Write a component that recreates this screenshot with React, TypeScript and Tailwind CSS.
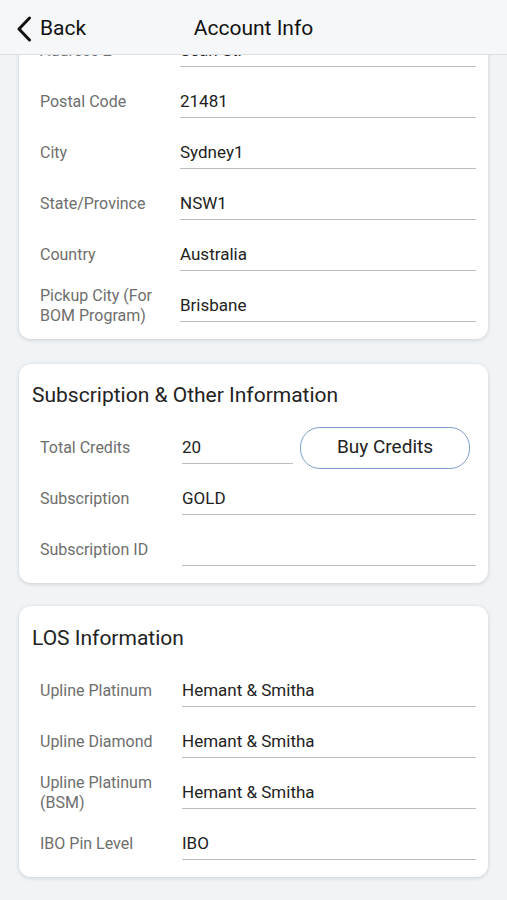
const Row = ({
  label,
  value,
  labelWidth = "w-[140px]",
}: {
  label: string;
  value: string;
  labelWidth?: string;
}) => (
  <div className="flex items-center h-[51px]">
    <div
      className={`${labelWidth} shrink-0 pr-[10px] text-[16px] leading-[20px] text-[#6e6e6e]`}
    >
      {label}
    </div>
    <div className="flex-1 h-[33px] pt-[2px] flex items-center border-b-[1.5px] border-[#bdbdbd] text-[17px] text-[#222]">
      {value}
    </div>
  </div>
);

const Card = ({ children, className = "" }: { children: React.ReactNode; className?: string }) => (
  <div
    className={`bg-white rounded-[12px] shadow-[0_1px_4px_rgba(0,0,0,0.16)] pl-[21px] pr-[12px] ${className}`}
  >
    {children}
  </div>
);

const App: React.FunctionComponent = () => {
  return (
    <div
      className="w-[507px] h-[900px] overflow-hidden bg-[#f1f4f7] flex flex-col"
      style={{ fontFamily: "Roboto, 'Liberation Sans', sans-serif" }}
    >
      <div className="relative z-10 h-[55px] shrink-0 bg-[#f6f7f9] border-b border-[#dedfe1] flex items-center pt-[4px]">
        <div className="flex items-center pl-[16px] gap-[8px] w-[150px]">
          <svg width="16" height="26" viewBox="0 0 16 26" fill="none">
            <polyline
              points="13.5,2 3,13 13.5,24"
              stroke="#111"
              strokeWidth="3"
              strokeLinecap="round"
              strokeLinejoin="round"
            />
          </svg>
          <span className="text-[21px] text-[#111]">Back</span>
        </div>
        <div className="absolute left-0 right-0 text-center text-[21px] text-[#111] pointer-events-none">
          Account Info
        </div>
      </div>

      <div className="px-[19px]">
        <Card className="mt-[-37px] pt-[7px] pb-[8px]">
          <Row label="Address 2" value="Sean St." />
          <Row label="Postal Code" value="21481" />
          <Row label="City" value="Sydney1" />
          <Row label="State/Province" value="NSW1" />
          <Row label="Country" value="Australia" />
          <Row label="Pickup City (For BOM Program)" value="Brisbane" />
        </Card>

        <Card className="mt-[25px] pt-[17px] pb-[8px]">
          <div className="-ml-[8px] text-[21px] leading-[28px] text-[#222] mb-[13px]">
            Subscription &amp; Other Information
          </div>
          <div className="flex items-center h-[51px]">
            <div className="w-[142px] shrink-0 pr-[10px] text-[16px] leading-[20px] text-[#6e6e6e]">
              Total Credits
            </div>
            <div className="w-[111px] h-[33px] pt-[2px] flex items-center border-b-[1.5px] border-[#bdbdbd] text-[17px] text-[#222]">
              20
            </div>
            <button className="ml-[7px] w-[170px] h-[42px] rounded-[20px] border-[1.5px] border-[#7f9ccf] bg-white text-[19px] text-[#222]">
              Buy Credits
            </button>
          </div>
          <Row label="Subscription" value="GOLD" labelWidth="w-[142px]" />
          <Row label="Subscription ID" value="" labelWidth="w-[142px]" />
        </Card>

        <Card className="mt-[23px] pt-[18px] pb-[8px]">
          <div className="-ml-[8px] text-[21px] leading-[28px] text-[#222] mb-[13px]">
            LOS Information
          </div>
          <Row label="Upline Platinum" value="Hemant & Smitha" labelWidth="w-[142px]" />
          <Row label="Upline Diamond" value="Hemant & Smitha" labelWidth="w-[142px]" />
          <Row label="Upline Platinum (BSM)" value="Hemant & Smitha" labelWidth="w-[142px]" />
          <Row label="IBO Pin Level" value="IBO" labelWidth="w-[142px]" />
        </Card>
      </div>
    </div>
  );
};

export default App;
